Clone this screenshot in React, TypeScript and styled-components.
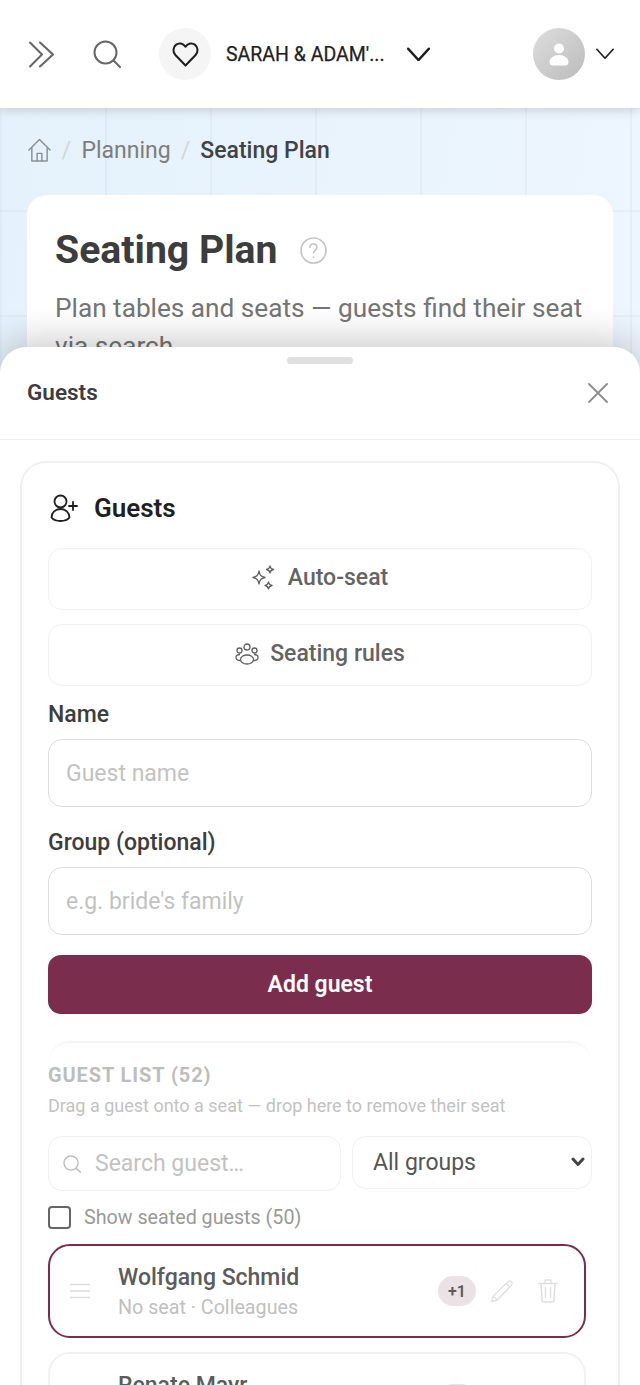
import React from 'react';
import styled, { createGlobalStyle } from 'styled-components';

const Global = createGlobalStyle`
  html, body { margin: 0; padding: 0; background: #fff; }
  * { box-sizing: border-box; }
  body { font-family: Roboto, "Liberation Sans", sans-serif; }
`;

const Page = styled.div`
  position: relative;
  width: 640px;
  height: 1385px;
  overflow: hidden;
  background-color: #eaf4fd;
  background-image:
    linear-gradient(to right, rgba(190, 205, 225, 0.18) 2px, transparent 2px),
    linear-gradient(to bottom, rgba(190, 205, 225, 0.18) 2px, transparent 2px),
    linear-gradient(100deg, #e5f1fb 0%, #e9f4fd 45%, #f0f6fe 100%);
  background-size: 105px 105px, 105px 105px, 100% 100%;
  background-position: 0 0, 0 0, 0 0;
`;

const Header = styled.header`
  height: 108px;
  background: #fff;
  display: flex;
  align-items: center;
  padding: 0 25px 0 27px;
  box-shadow: 0 2px 10px rgba(0, 0, 0, 0.16);
  position: relative;
`;

const IconSlot = styled.span<{ $w: number; $mr?: number; $ml?: number }>`
  display: inline-flex;
  align-items: center;
  justify-content: center;
  flex: none;
  width: ${(p) => p.$w}px;
  margin-right: ${(p) => p.$mr ?? 0}px;
  margin-left: ${(p) => p.$ml ?? 0}px;
`;

const HeartCircle = styled.span`
  width: 52px;
  height: 52px;
  border-radius: 50%;
  background: #f5f5f5;
  display: flex;
  align-items: center;
  justify-content: center;
  flex: none;
  color: #1e1e1e;
  margin-right: 15px;
`;

const EventName = styled.span`
  width: 160px;
  white-space: nowrap;
  font-size: 19.5px;
  font-weight: 400;
  -webkit-text-stroke: 0.25px #222;
  color: #222;
  flex: none;
`;

const Spacer = styled.span`
  flex: 1;
`;

const Avatar = styled.span`
  width: 52px;
  height: 52px;
  border-radius: 50%;
  background: linear-gradient(135deg, #dedede, #bbbbbb);
  display: flex;
  align-items: center;
  justify-content: center;
  flex: none;
  margin-right: 10px;
`;

const Crumbs = styled.nav`
  display: flex;
  align-items: center;
  height: 30px;
  margin: 27px 0 0 28px;
  font-size: 23px;
  color: #7d7d7d;
`;

const Sep = styled.span<{ $m: number }>`
  color: #d2d6da;
  margin: 0 ${(p) => p.$m}px;
`;

const Current = styled.span`
  color: #3f4346;
  font-weight: 500;
`;

const IntroCard = styled.section`
  margin: 30px 27px 0;
  padding: 28px 28px;
  height: 400px;
  background: #fff;
  border-radius: 20px;
`;

const TitleRow = styled.div`
  display: flex;
  align-items: center;
  gap: 22px;
  height: 54px;
`;

const Title = styled.h1`
  margin: 0;
  font-size: 39.2px;
  font-weight: 700;
  color: #3d3d3d;
`;

const Desc = styled.p`
  margin: 12px 0 0;
  font-size: 26.2px;
  line-height: 38px;
  color: #757575;
`;

const Sheet = styled.aside`
  position: absolute;
  left: 0;
  right: 0;
  top: 347px;
  bottom: 0;
  background: #fff;
  border-radius: 26px 26px 0 0;
  box-shadow: 0 -8px 36px rgba(0, 0, 0, 0.2);
  overflow: hidden;
`;

const Handle = styled.div`
  width: 66px;
  height: 7px;
  border-radius: 4px;
  background: #e0e0e0;
  margin: 10px auto 0;
`;

const SheetHead = styled.div`
  height: 76px;
  display: flex;
  align-items: flex-start;
  justify-content: space-between;
  padding: 13px 32px 0 27px;
  border-bottom: 1px solid #eee;
`;

const SheetTitle = styled.h2`
  margin: 0;
  font-size: 22.5px;
  line-height: 30px;
  font-weight: 600;
  color: #3d3d3d;
`;

const CloseIcon = styled.svg`
  margin-top: 6px;
`;

const SheetBody = styled.div`
  padding: 21px 20px 0;
`;

const GuestCard = styled.div`
  border: 2px solid #f0f0f0;
  border-bottom: 0;
  border-radius: 26px 26px 0 0;
  padding: 26px 26px 0;
  height: 1000px;
`;

const CardHead = styled.div`
  display: flex;
  align-items: center;
  gap: 16px;
  height: 38px;
  margin-bottom: 21px;
  padding-left: 2px;
`;

const CardTitle = styled.h3`
  margin: 0;
  font-size: 26px;
  font-weight: 600;
  color: #1f1f1f;
`;

const GhostButton = styled.button<{ $gap: number }>`
  display: flex;
  align-items: center;
  justify-content: center;
  gap: ${(p) => p.$gap}px;
  width: 100%;
  height: 62px;
  margin-bottom: 14px;
  padding: 0 0 3px;
  background: #fff;
  border: 1.5px solid #f1f1f1;
  border-radius: 14px;
  font: 500 23px Roboto, sans-serif;
  color: #646464;
`;

const Label = styled.label`
  display: block;
  font-size: 23px;
  font-weight: 500;
  line-height: 28px;
  color: #3d3d3d;
  margin-bottom: 10px;
  &:first-of-type { padding-top: 1px; }
`;

const TextInput = styled.input`
  display: block;
  width: 100%;
  height: 68px;
  padding: 0 17px;
  margin-bottom: 22px;
  border: 1.5px solid #dcdcdc;
  border-radius: 14px;
  background: #fff;
  font: 400 23px Roboto, sans-serif;
  color: #333;
  &::placeholder { color: #c2c2c2; opacity: 1; }
`;

const AddButton = styled.button`
  display: block;
  width: 100%;
  height: 59px;
  margin-top: -2px;
  border: 0;
  border-radius: 13px;
  background: #7b2d4e;
  color: #fff;
  font: 600 23px Roboto, sans-serif;
`;

const ListPanel = styled.div`
  margin-top: 27px;
  border-top: 2px solid #f6f6f6;
  border-radius: 22px 22px 0 0;
  padding-top: 19px;
`;

const ListTitle = styled.div`
  font-size: 20px;
  font-weight: 700;
  letter-spacing: 0.9px;
  line-height: 26px;
  color: #bdbdbd;
`;

const ListHint = styled.div`
  margin-top: 6px;
  font-size: 18px;
  line-height: 24px;
  color: #c2c2c2;
`;

const FilterRow = styled.div`
  display: flex;
  gap: 11px;
  align-items: flex-start;
  margin-top: 18px;
`;

const SearchBox = styled.div`
  width: 293px;
  height: 55px;
  display: flex;
  align-items: center;
  gap: 14px;
  padding: 0 14px;
  border: 1.5px solid #f0f0f0;
  border-radius: 14px;
`;

const SearchInput = styled.input`
  flex: 1;
  min-width: 0;
  border: 0;
  outline: 0;
  padding: 0;
  font: 400 23px Roboto, sans-serif;
  &::placeholder { color: #c2c2c2; opacity: 1; }
`;

const SelectWrap = styled.div`
  position: relative;
  flex: 1;
  min-width: 0;
  height: 53px;
`;

const GroupSelect = styled.select`
  appearance: none;
  display: block;
  width: 100%;
  height: 100%;
  padding: 0 30px 0 20px;
  border: 1.5px solid #f0f0f0;
  border-radius: 14px;
  background: #fff;
  font: 400 23px Roboto, sans-serif;
  color: #555;
`;

const SelectArrow = styled.svg`
  position: absolute;
  right: 7px;
  top: 21px;
  pointer-events: none;
`;

const CheckRow = styled.label`
  display: flex;
  align-items: center;
  gap: 13px;
  height: 24px;
  margin-top: 14px;
  font-size: 19.7px;
  color: #999;
`;

const Box = styled.input`
  appearance: none;
  width: 23px;
  height: 23px;
  margin: 0;
  border: 2px solid #666;
  border-radius: 4px;
  background: #fff;
`;

const GuestRow = styled.div<{ $active?: boolean }>`
  display: flex;
  align-items: center;
  width: 538px;
  height: 94px;
  margin-top: ${(p) => (p.$active ? 15 : 14)}px;
  padding: 0 26px 0 19px;
  border: 2px solid ${(p) => (p.$active ? '#7b2d4e' : '#f1f1f1')};
  border-radius: 22px;
  background: #fff;
`;

const Grip = styled.span`
  width: 49px;
  flex: none;
  display: flex;
  color: #dcdcdc;
`;

const GuestInfo = styled.div`
  flex: 1;
  min-width: 0;
  margin-top: 2px;
`;

const GuestName = styled.div`
  font-size: 23px;
  font-weight: 500;
  line-height: 30px;
  color: #5c5c5c;
`;

const GuestMeta = styled.div`
  margin-top: 2px;
  font-size: 19.7px;
  line-height: 26px;
  color: #c0c0c0;
`;

const PlusOne = styled.span`
  width: 38px;
  height: 30px;
  flex: none;
  display: flex;
  align-items: center;
  justify-content: center;
  border-radius: 15px;
  background: #ebe2e6;
  font-size: 16px;
  font-weight: 600;
  color: #5c5c5c;
  margin-right: 14px;
`;

const Tool = styled.span<{ $mr?: number }>`
  display: flex;
  flex: none;
  color: #dedede;
  margin-right: ${(p) => p.$mr ?? 0}px;
`;

const Chevron = ({ size, sw = 2.2, color = '#1e1e1e' }: { size: number; sw?: number; color?: string }) => (
  <svg width={size} height={size * 0.64} viewBox="0 0 22 14" fill="none" stroke={color} strokeWidth={sw} strokeLinecap="round" strokeLinejoin="round">
    <path d="M1 1.5 11 12.5 21 1.5" />
  </svg>
);

const Home = () => (
  <svg width="23" height="25" viewBox="0 0 24 26" fill="none" stroke="#8a9094" strokeWidth="1.5" strokeLinejoin="round" strokeLinecap="round">
    <path d="M1 12.500 12 1.500l11 11" />
    <path d="M4 10v14h16V10" />
    <path d="M9.500 24v-8h5v8" />
  </svg>
);

const Grid = () => (
  <svg width="22" height="16" viewBox="0 0 22 16" stroke="currentColor" strokeWidth="1.6" fill="none">
    <path d="M1 1.500h20M1 8h20M1 14.500h20" />
  </svg>
);

const Pencil = () => (
  <svg width="24" height="25" viewBox="0 0 26 26" fill="none" stroke="currentColor" strokeWidth="1.4" strokeLinejoin="round">
    <path d="M2 24l1.500-6L19.500 2.500a2.500 2.500 0 0 1 3.600 0 2.500 2.500 0 0 1 .2 3.600L8 22z" />
    <path d="M17.500 4.500l4 4M3.500 18 8 22" />
  </svg>
);

const Trash = () => (
  <svg width="20" height="24" viewBox="0 0 20 24" fill="none" stroke="currentColor" strokeWidth="1.400" strokeLinecap="round" strokeLinejoin="round">
    <path d="M1 4.500h18M7 4.500V2a1 1 0 0 1 1-1h4a1 1 0 0 1 1 1v2.500" />
    <path d="M3 4.500 4 21a2 2 0 0 0 2 2h8a2 2 0 0 0 2-2l1-16.500" />
    <path d="M7.500 8.500v10M12.500 8.500v10" />
  </svg>
);

const SearchIcon = ({ size, color, sw }: { size: number; color: string; sw: number }) => (
  <svg width={size} height={size} viewBox="0 0 28 28" fill="none" stroke={color} strokeWidth={sw} strokeLinecap="round">
    <circle cx="12.500" cy="12.500" r="11" />
    <path d="M20.500 20.500 27 27" />
  </svg>
);

const GuestEntry = ({ name, meta, active }: { name: string; meta: string; active?: boolean }) => (
  <GuestRow $active={active}>
    <Grip><Grid /></Grip>
    <GuestInfo>
      <GuestName>{name}</GuestName>
      <GuestMeta>{meta}</GuestMeta>
    </GuestInfo>
    <PlusOne>+1</PlusOne>
    <Tool $mr={24}><Pencil /></Tool>
    <Tool><Trash /></Tool>
  </GuestRow>
);

export default function App() {
  return (
    <Page>
      <Global />
      <Header>
        <IconSlot $w={28} $mr={38}>
          <svg width="27" height="27" viewBox="0 0 27 27" fill="none" stroke="#666" strokeWidth="2.100" strokeLinecap="round" strokeLinejoin="round">
            <path d="M2 1.500 14 13.500 2 25.500M12 1.500 25 13.500 12 25.500" />
          </svg>
        </IconSlot>
        <IconSlot $w={28} $mr={38}>
          <SearchIcon size={28} color="#666" sw={2} />
        </IconSlot>
        <HeartCircle>
          <svg width="27" height="25" viewBox="0 0 28 26" fill="none" stroke="currentColor" strokeWidth="2.100" strokeLinejoin="round">
            <path d="M14 24.500 3.500 13.500C.5 10 1 5.500 4 3c3-2.400 7.500-1.800 10 2 2.500-3.800 7-4.400 10-2 3 2.500 3.500 7 .5 10.500z" />
          </svg>
        </HeartCircle>
        <EventName>SARAH &amp; ADAM'...</EventName>
        <IconSlot $w={24} $ml={20}>
          <Chevron size={23} />
        </IconSlot>
        <Spacer />
        <Avatar>
          <svg width="20" height="23" viewBox="0 0 20 23" fill="#fff">
            <circle cx="10" cy="5.500" r="5" />
            <path d="M10 12c5.500 0 9.500 3.500 9.500 7 0 2.500-1.500 3.500-3.500 3.500H4c-2 0-3.500-1-3.500-3.500 0-3.500 4-7 9.500-7z" />
          </svg>
        </Avatar>
        <IconSlot $w={20}>
          <Chevron size={18} sw={2} />
        </IconSlot>
      </Header>

      <Crumbs>
        <Home />
        <Sep $m={10.5}>/</Sep>
        <span>Planning</span>
        <Sep $m={10}>/</Sep>
        <Current>Seating Plan</Current>
      </Crumbs>

      <IntroCard>
        <TitleRow>
          <Title>Seating Plan</Title>
          <svg width="27" height="27" viewBox="0 0 27 27" fill="none" stroke="#c4c4c4" strokeWidth="1.600" strokeLinecap="round">
            <circle cx="13.500" cy="13.500" r="12.500" />
            <path d="M10 10.500c0-2 1.500-3.500 3.500-3.500s3.500 1.400 3.500 3.300c0 2.700-3.500 2.800-3.500 5.700" />
            <path d="M13.500 20v.2" />
          </svg>
        </TitleRow>
        <Desc>Plan tables and seats — guests find their seat via search</Desc>
      </IntroCard>

      <Sheet>
        <Handle />
        <SheetHead>
          <SheetTitle>Guests</SheetTitle>
          <CloseIcon width="20" height="20" viewBox="0 0 20 20" stroke="#8c8c8c" strokeWidth="1.800" strokeLinecap="round">
            <path d="M1 1l18 18M19 1 1 19" />
          </CloseIcon>
        </SheetHead>
        <SheetBody>
          <GuestCard>
            <CardHead>
              <svg width="28" height="28" viewBox="0 0 28 28" fill="none" stroke="#1f1f1f" strokeWidth="1.800" strokeLinecap="round" strokeLinejoin="round">
                <circle cx="10.500" cy="7.500" r="6" />
                <path d="M1.500 23.500c0-5 4-8.500 9-8.500s9 3.500 9 8.500c-1.500 2-5 3.500-9 3.500s-7.500-1.500-9-3.500z" />
                <path d="M19 12h8M23 8v8" />
              </svg>
              <CardTitle>Guests</CardTitle>
            </CardHead>
            <GhostButton $gap={12}>
              <svg width="24" height="26" viewBox="0 0 24 26" fill="none" stroke="#5f5f5f" strokeWidth="1.300" strokeLinejoin="round">
                <path d="M7 6c.8 4.200 2 5.500 6 6.500-4 1-5.200 2.300-6 6.500-.8-4.200-2-5.500-6-6.500 4-1 5.200-2.300 6-6.500z" />
                <path d="M18 1c.4 2.300 1 3 3.500 3.500C19 5 18.400 5.700 18 8c-.4-2.300-1-3-3.500-3.500C17 4 17.600 3.300 18 1z" />
                <path d="M16.500 17c.4 2.300 1 3 3.500 3.500-2.500.5-3.100 1.200-3.500 3.500-.4-2.300-1-3-3.500-3.500 2.500-.5 3.100-1.200 3.500-3.500z" />
              </svg>
              Auto-seat
            </GhostButton>
            <GhostButton $gap={11}>
              <svg width="24" height="22" viewBox="0 0 24 22" fill="none" stroke="#5f5f5f" strokeWidth="1.300">
                <circle cx="12" cy="4" r="3" />
                <circle cx="4.500" cy="7.500" r="2.500" />
                <circle cx="19.500" cy="7.500" r="2.500" />
                <ellipse cx="12" cy="16.500" rx="6.500" ry="4.500" />
                <path d="M5 17.500c-2.500 0-4-1-4-3s1.500-3 4-3M19 17.500c2.500 0 4-1 4-3s-1.500-3-4-3" />
              </svg>
              Seating rules
            </GhostButton>
            <Label>Name</Label>
            <TextInput placeholder="Guest name" />
            <Label>Group (optional)</Label>
            <TextInput placeholder="e.g. bride's family" />
            <AddButton>Add guest</AddButton>
            <ListPanel>
              <ListTitle>GUEST LIST (52)</ListTitle>
              <ListHint>Drag a guest onto a seat — drop here to remove their seat</ListHint>
              <FilterRow>
                <SearchBox>
                  <SearchIcon size={18} color="#bdbdbd" sw={2.200} />
                  <SearchInput placeholder="Search guest…" />
                </SearchBox>
                <SelectWrap>
                  <GroupSelect defaultValue="all">
                    <option value="all">All groups</option>
                  </GroupSelect>
                  <SelectArrow width="14" height="10" viewBox="0 0 14 10" fill="none" stroke="#444" strokeWidth="3" strokeLinecap="round" strokeLinejoin="round">
                    <path d="M2 2l5 5.500L12 2" />
                  </SelectArrow>
                </SelectWrap>
              </FilterRow>
              <CheckRow>
                <Box type="checkbox" />
                Show seated guests (50)
              </CheckRow>
              <GuestEntry active name="Wolfgang Schmid" meta="No seat · Colleagues" />
              <GuestEntry name="Renate Mayr" meta="No seat · Family" />
            </ListPanel>
          </GuestCard>
        </SheetBody>
      </Sheet>
    </Page>
  );
}
